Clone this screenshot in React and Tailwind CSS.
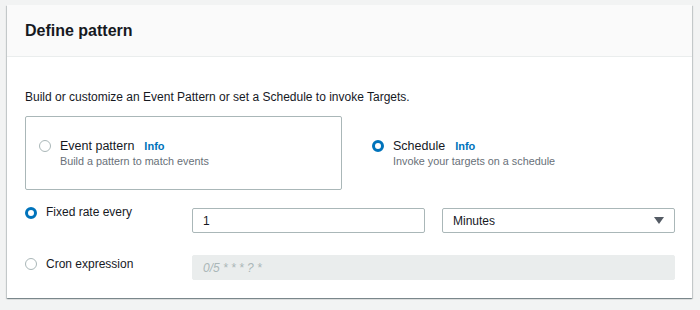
import React from "react";

function Radio({ checked }) {
  return checked ? (
    <span className="box-border inline-block h-[12px] w-[12px] shrink-0 rounded-full border-[3.5px] border-[#0073bb] bg-white" />
  ) : (
    <span className="box-border inline-block h-[12px] w-[12px] shrink-0 rounded-full border border-[#aab7b8] bg-white" />
  );
}

function Tile({ checked, title, desc, bordered }) {
  return (
    <div
      className={
        "flex h-[74px] items-center rounded-[2px] pl-[13px] " +
        (bordered ? "border border-[#aab7b8]" : "border border-transparent")
      }
    >
      <div className="flex items-start gap-[9px]">
        <div className="flex h-[16px] items-center">
          <Radio checked={checked} />
        </div>
        <div className="flex flex-col">
          <div className="flex h-[16px] items-center gap-[10px]">
            <span className="text-[12.5px] text-[#16191f]">{title}</span>
            <span className="text-[11px] font-bold text-[#0073bb]">Info</span>
          </div>
          <span className="text-[10.8px] leading-[14px] text-[#687078]">{desc}</span>
        </div>
      </div>
    </div>
  );
}

export default function App() {
  return (
    <div
      className="h-[310px] w-[700px] bg-[#f2f3f3] pl-[7px] pt-[5px]"
      style={{ fontFamily: '"Liberation Sans", Arial, sans-serif' }}
    >
      <div className="w-[685px] bg-white shadow-[0_1px_1px_0_rgba(0,28,36,0.3),1px_1px_1px_0_rgba(0,28,36,0.15),-1px_1px_1px_0_rgba(0,28,36,0.15)]">
        <div className="flex h-[52px] items-center border-b border-[#eaeded] bg-[#fafafa] pl-[18px]">
          <h2 className="text-[16px] font-bold text-[#16191f]">Define pattern</h2>
        </div>
        <div className="pb-[18px] pl-[18px] pr-[17px] pt-[32px]">
          <p className="text-[12px] leading-[16px] text-[#16191f]">
            Build or customize an Event Pattern or set a Schedule to invoke Targets.
          </p>
          <div className="mt-[11px] grid grid-cols-2 gap-[16px]">
            <Tile bordered checked={false} title="Event pattern" desc="Build a pattern to match events" />
            <Tile checked title="Schedule" desc="Invoke your targets on a schedule" />
          </div>
          <div className="mt-[18px] flex">
            <div className="flex w-[167px] shrink-0 items-start gap-[9px]">
              <div className="flex h-[9px] items-center">
                <Radio checked />
              </div>
              <span className="-mt-[4px] text-[12px] leading-[16px] text-[#16191f]">Fixed rate every</span>
            </div>
            <div className="grid flex-1 grid-cols-2 gap-[17px]">
              <div className="flex h-[25px] items-center rounded-[2px] border border-[#aab7b8] bg-white pl-[10px] text-[12px] text-[#16191f]">
                1
              </div>
              <div className="flex h-[25px] items-center justify-between rounded-[2px] border border-[#aab7b8] bg-white pl-[10px] pr-[10px] text-[12px] text-[#16191f]">
                <span>Minutes</span>
                <svg width="10" height="7" viewBox="0 0 10 7">
                  <path d="M0 0 L10 0 L5 7 Z" fill="#545b64" />
                </svg>
              </div>
            </div>
          </div>
          <div className="mt-[22px] flex">
            <div className="flex w-[167px] shrink-0 items-start gap-[9px]">
              <div className="flex h-[18px] items-center">
                <Radio checked={false} />
              </div>
              <span className="mt-[1px] text-[12px] leading-[16px] text-[#16191f]">Cron expression</span>
            </div>
            <div className="flex h-[25px] flex-1 items-center rounded-[2px] border border-[#eaeded] bg-[#eaeded] pl-[10px] text-[12px] italic text-[#aab7b8]">
              0/5 * * * ? *
            </div>
          </div>
        </div>
      </div>
    </div>
  );
}
